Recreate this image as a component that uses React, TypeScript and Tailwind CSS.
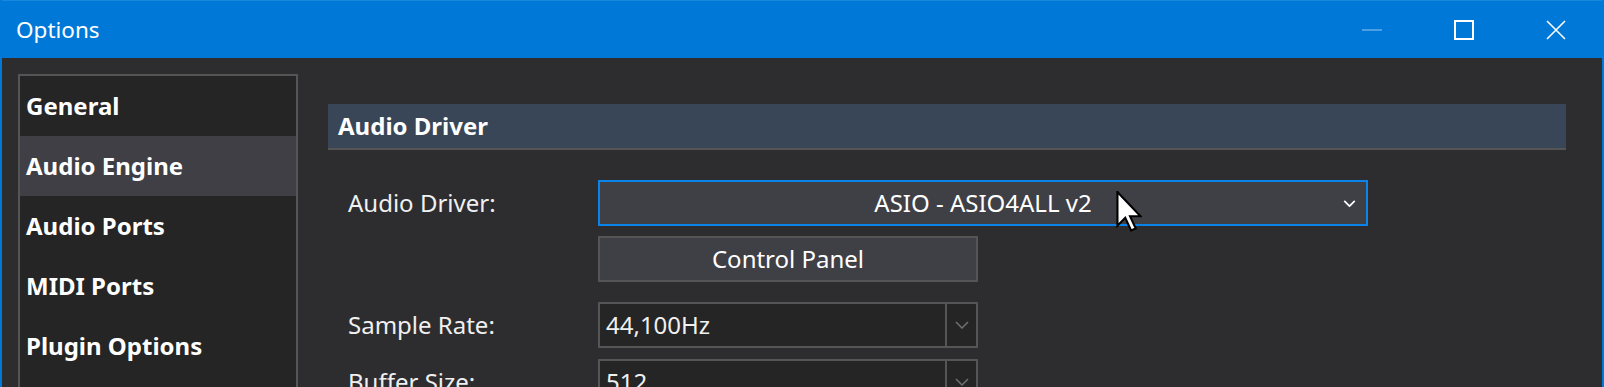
import React from 'react';

const font = { fontFamily: '"Noto Sans", "Open Sans", sans-serif' };

const navItems = ['General', 'Audio Engine', 'Audio Ports', 'MIDI Ports', 'Plugin Options'];

function Chevron({ className, stroke = 2 }: { className?: string; stroke?: number }) {
  return (
    <svg viewBox="0 0 14 8" className={className} fill="none">
      <path d="M1 1 L7 7 L13 1" stroke="currentColor" strokeWidth={stroke} />
    </svg>
  );
}

function Combo({ value }: { value: string }) {
  return (
    <div className="flex w-[380px] h-[46px] border-2 border-[#555555] bg-[#252526]">
      <div className="flex-1 flex items-center pl-[6px] text-[24px] text-[#f0f0f0]">{value}</div>
      <div className="w-[31px] border-l-2 border-[#555555] flex items-center justify-center text-[#707070]">
        <Chevron className="w-[14px] h-[8px]" stroke={1.5} />
      </div>
    </div>
  );
}

export default function App() {
  return (
    <div style={font} className="relative w-[1604px] h-[387px] overflow-hidden bg-[#2d2d30] border-x-2 border-[#0078d7] text-[#f0f0f0]">
      {/* title bar */}
      <div className="flex items-center h-[58px] bg-[#0078d7] border-t border-[#1a88dc]">
        <div className="pl-[14px] text-[22.5px] text-white flex-1">Options</div>
        <div className="flex h-full">
          <div className="w-[92px] flex items-center justify-center">
            <div className="w-[20px] h-[2px] bg-[#4d9fe3]" />
          </div>
          <div className="w-[92px] flex items-center justify-center">
            <div className="w-[20px] h-[20px] border-2 border-white" />
          </div>
          <div className="w-[92px] flex items-center justify-center">
            <svg viewBox="0 0 20 20" className="w-[20px] h-[20px]" fill="none">
              <path d="M1 1 L19 19 M19 1 L1 19" stroke="white" strokeWidth="1.6" />
            </svg>
          </div>
        </div>
      </div>

      {/* body */}
      <div className="flex pl-[16px] pt-[16px]">
        <div className="w-[280px] h-[400px] shrink-0 border-2 border-[#555555] bg-[#252526] flex flex-col">
          {navItems.map((item) => (
            <div
              key={item}
              className={`h-[60px] flex items-center px-[6px] text-[24px] font-bold text-white ${item === 'Audio Engine' ? 'bg-[#3f3f45]' : ''}`}
            >
              {item}
            </div>
          ))}
        </div>

        <div className="flex-1 ml-[30px] mr-[36px] pt-[30px]">
          <div className="h-[46px] bg-[#394657] border-b-2 border-[#555555] flex items-center px-[10px] text-[24px] font-bold text-white">
            Audio Driver
          </div>

          <div className="flex items-center mt-[30px]">
            <div className="w-[270px] pl-[20px] text-[24px]">Audio Driver:</div>
            <div className="relative w-[770px] h-[46px] border-2 border-[#0a84ea] bg-[#3f3f46] flex items-center justify-center text-[24px] text-white">
              ASIO - ASIO4ALL v2
              <Chevron className="absolute right-[10px] top-[18px] w-[13px] h-[7px] text-white" stroke={2} />
            </div>
          </div>

          <div className="ml-[270px] mt-[10px] w-[380px] h-[46px] border-2 border-[#555555] bg-[#3f3f46] flex items-center justify-center text-[24px] text-white">
            Control Panel
          </div>

          <div className="flex items-center mt-[20px]">
            <div className="w-[270px] pl-[20px] text-[24px]">Sample Rate:</div>
            <Combo value="44,100Hz" />
          </div>

          <div className="flex items-center mt-[11px]">
            <div className="w-[270px] pl-[20px] text-[24px]">Buffer Size:</div>
            <Combo value="512" />
          </div>
        </div>
      </div>

      {/* mouse cursor */}
      <svg viewBox="0 0 12 20" className="absolute left-[1114px] top-[191px] w-[26px] h-[42px]">
        <path d="M0.5 0.5 L0.5 16.5 L4.2 12.8 L7 18.8 L9.2 17.8 L6.5 12 L11.5 12 Z" fill="white" stroke="black" strokeWidth="1" strokeLinejoin="miter" />
      </svg>
    </div>
  );
}
